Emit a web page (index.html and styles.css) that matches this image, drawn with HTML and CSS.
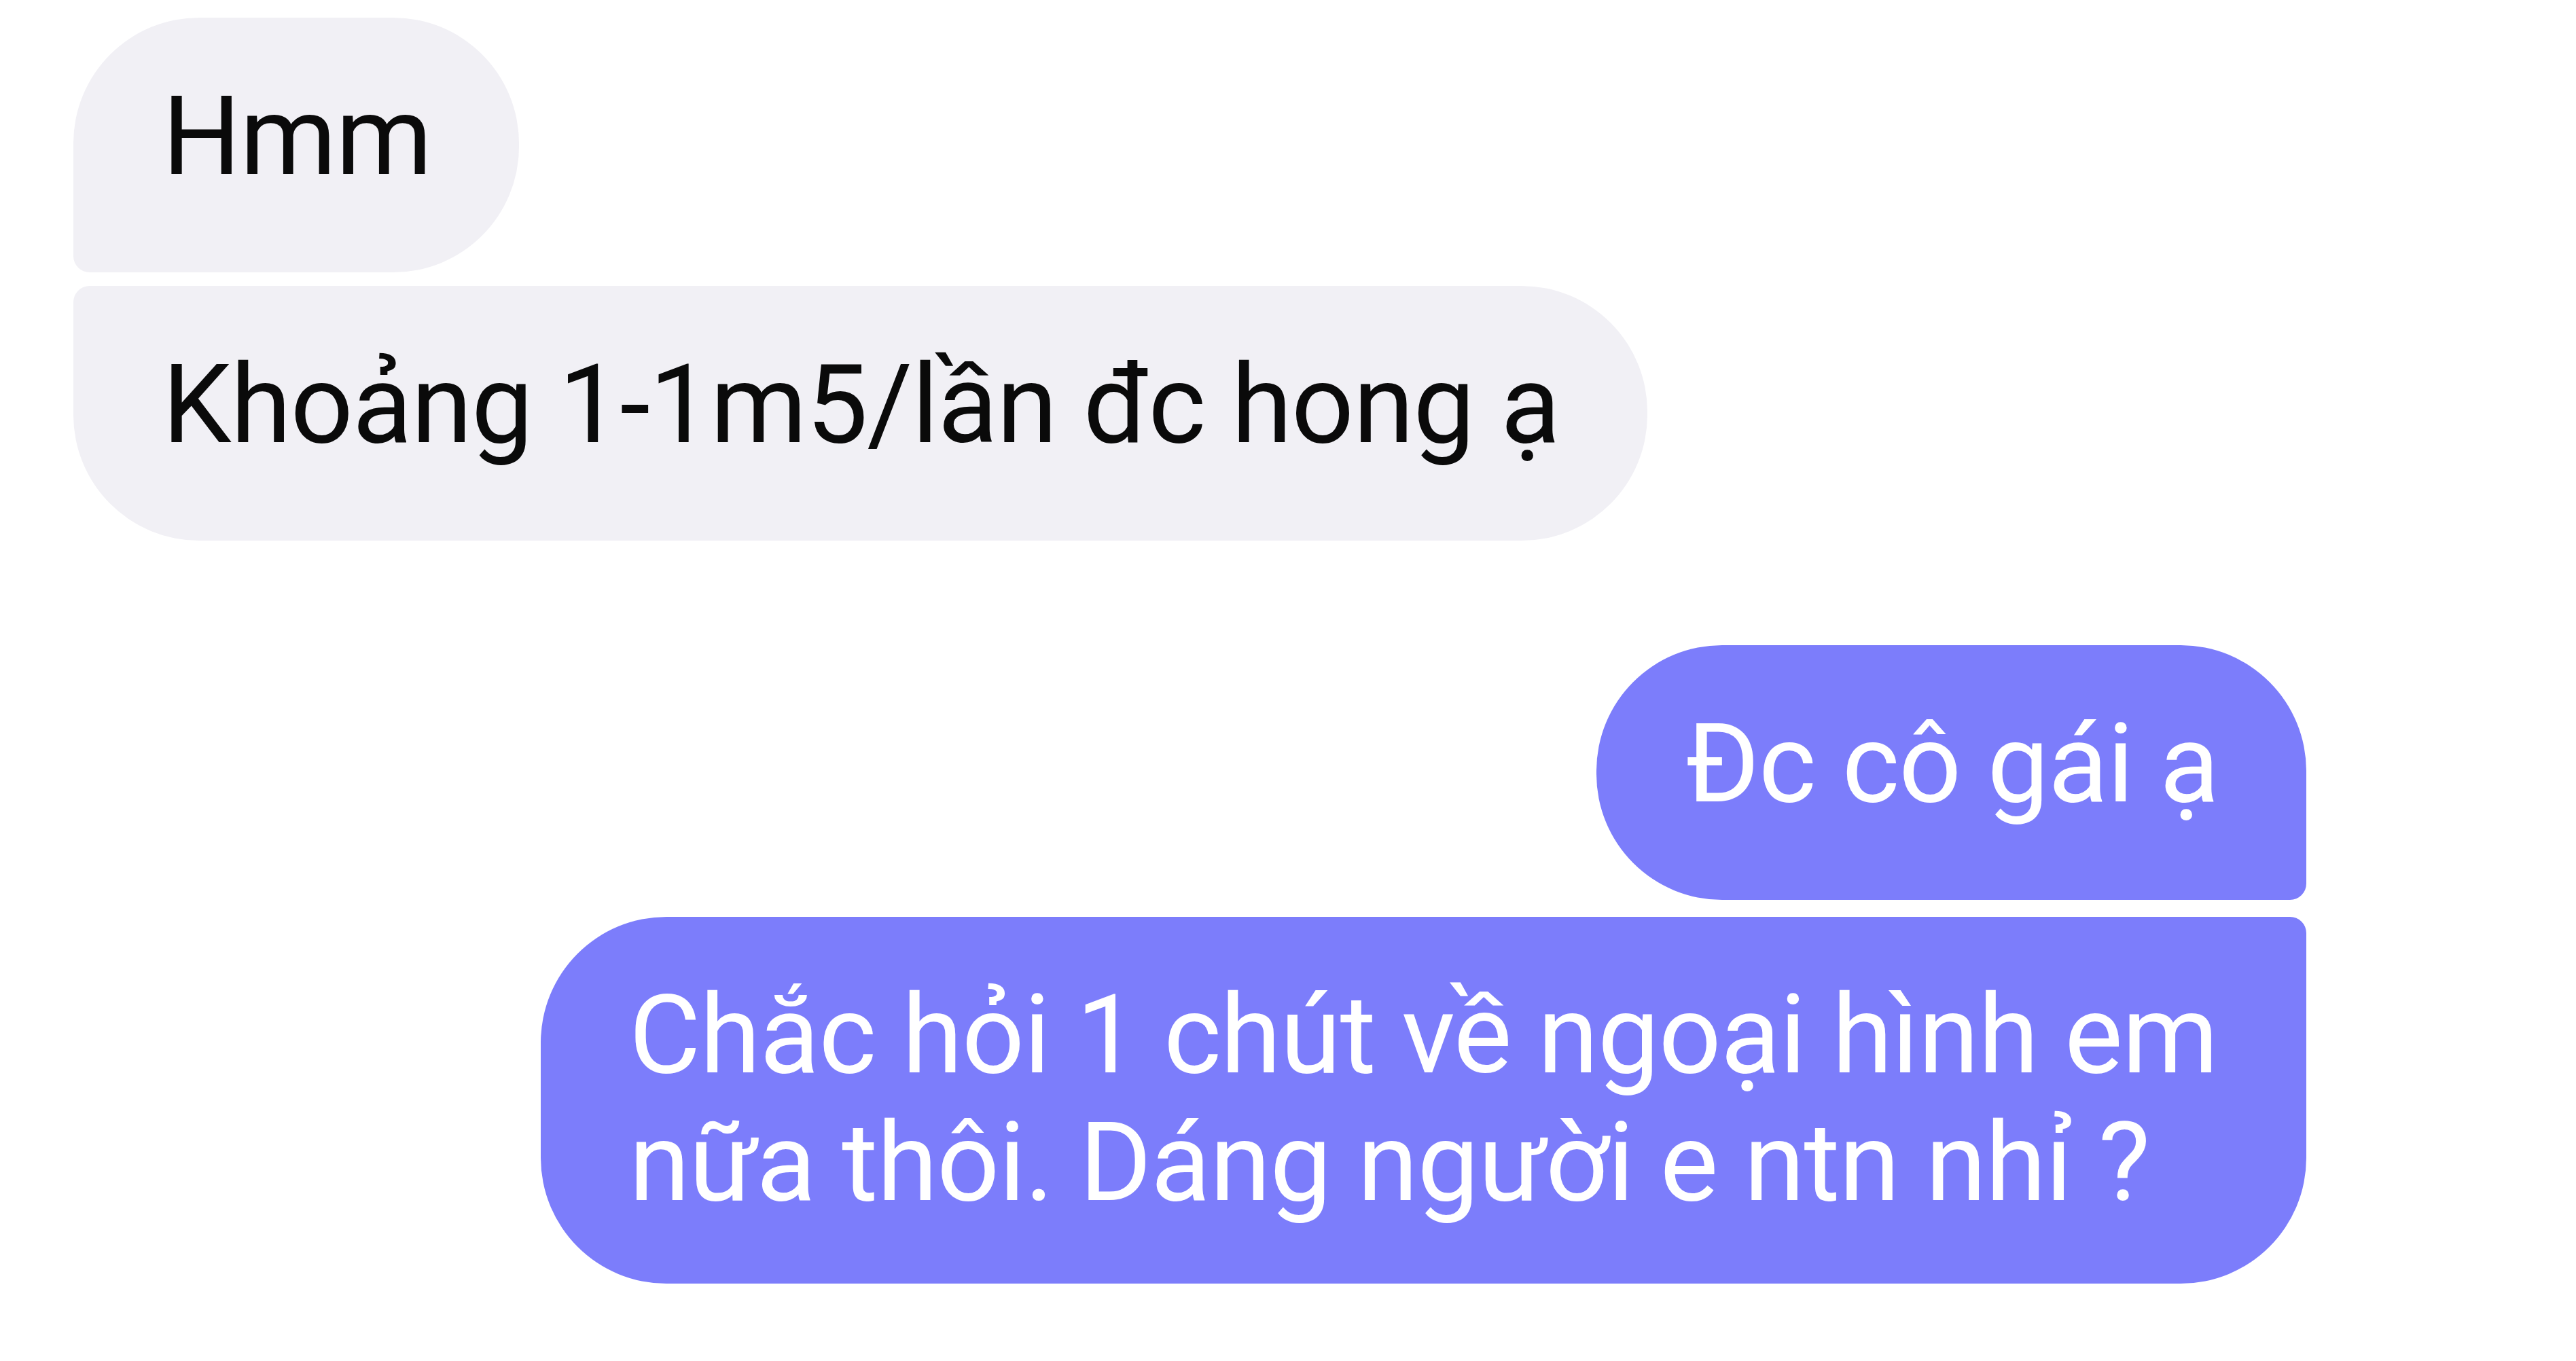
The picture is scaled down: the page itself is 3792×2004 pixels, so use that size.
FILE: index.html
```html
<!DOCTYPE html>
<html lang="vi">
<head>
<meta charset="utf-8">
<title>Chat</title>
<link rel="stylesheet" href="styles.css">
</head>
<body>
<div class="chat">
  <div class="group group-in">
    <div class="bubble in first">Hmm</div>
    <div class="bubble in last">Khoảng 1-1m5/lần đc hong ạ</div>
  </div>
  <div class="group group-out">
    <div class="bubble out first">Đc cô gái ạ</div>
    <div class="bubble out last wide">Chắc hỏi 1 chút về ngoại hình em nữa thôi. Dáng người e ntn nhỉ ?</div>
  </div>
</div>
</body>
</html>
```
FILE: styles.css
```css
html, body {
  margin: 0;
  padding: 0;
  background: #ffffff;
}
.chat {
  width: 3792px;
  height: 2004px;
  box-sizing: border-box;
  padding: 26px 397px 0 108px;
  display: flex;
  flex-direction: column;
  font-family: Roboto, "Noto Sans", "Liberation Sans", sans-serif;
}
.group {
  display: flex;
  flex-direction: column;
}
.group-in {
  align-items: flex-start;
  gap: 20px;
}
.group-out {
  align-items: flex-end;
  gap: 25px;
  margin-top: 154px;
}
.bubble {
  box-sizing: border-box;
  padding: 80px 129px 105px 131px;
  font-size: 162px;
  letter-spacing: -1.2px;
  line-height: 190px;
  border-radius: 185px;
}
.in {
  background: #f1f0f5;
  color: #0a0a0a;
}
.out {
  background: #7c7dfb;
  color: #ffffff;
}
.in.first {
  border-bottom-left-radius: 24px;
}
.in.last {
  border-top-left-radius: 24px;
}
.out.first {
  border-bottom-right-radius: 24px;
}
.out.last {
  border-top-right-radius: 24px;
}
.wide {
  width: 2599px;
  line-height: 188px;
  padding: 80px 100px 84px 130px;
}
```
